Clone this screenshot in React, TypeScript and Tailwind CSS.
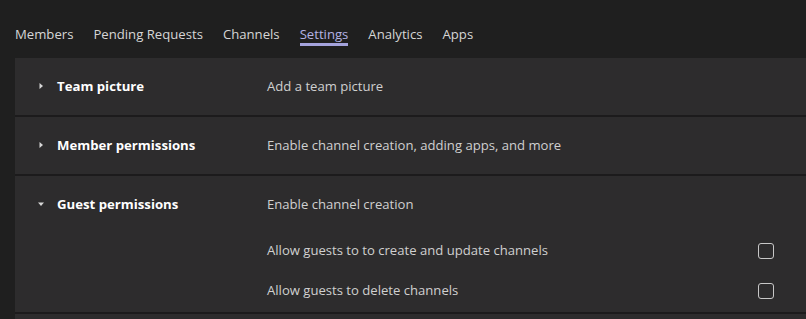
const tabs = ["Members", "Pending Requests", "Channels", "Settings", "Analytics", "Apps"];

function Caret({ open }: { open?: boolean }) {
  return (
    <svg width="8" height="8" viewBox="0 0 8 8" className="shrink-0">
      {open ? (
        <path d="M1 2.5 L7 2.5 L4 6 Z" fill="#d6d6d6" />
      ) : (
        <path d="M2.5 1 L6 4 L2.5 7 Z" fill="#d6d6d6" />
      )}
    </svg>
  );
}

function Checkbox() {
  return <div className="h-4 w-4 rounded-[3px] border border-[#c8c8c8]" />;
}

function Row({
  title,
  desc,
  open,
  children,
}: {
  title: string;
  desc: string;
  open?: boolean;
  children?: React.ReactNode;
}) {
  return (
    <div className="bg-[#2d2c2d]">
      <div className="flex h-[57px] items-center">
        <div className="flex w-[252px] items-center pl-[22px]">
          <div className="w-[20px]">
            <Caret open={open} />
          </div>
          <span className="text-[13.2px] font-bold text-white">{title}</span>
        </div>
        <span className="text-[13.1px] text-[#d0d0d0]">{desc}</span>
      </div>
      {children}
    </div>
  );
}

export default function App() {
  return (
    <div
      className="h-[319px] w-[806px] overflow-hidden bg-[#1f1f1f]"
      style={{ fontFamily: '"Open Sans", sans-serif' }}
    >
      <div className="flex gap-5 px-[15px] pt-[24px]">
        {tabs.map((t) => (
          <div key={t} className="flex flex-col">
            <span
              className={
                t === "Settings"
                  ? "text-[13.15px] leading-[20px] text-[#b3b2e4]"
                  : "text-[13.15px] leading-[20px] text-[#d6d6d6]"
              }
            >
              {t}
            </span>
            <div
              className={
                t === "Settings"
                  ? "mt-[-1px] h-[3px] bg-[#a4a3dc]"
                  : "mt-[-1px] h-[3px]"
              }
            />
          </div>
        ))}
      </div>
      <div className="ml-[15px] mt-[12px] flex flex-col gap-[2px] bg-[#1c1b1c]">
        <Row title="Team picture" desc="Add a team picture" />
        <Row title="Member permissions" desc="Enable channel creation, adding apps, and more" />
        <Row title="Guest permissions" desc="Enable channel creation" open>
          <div className="flex flex-col gap-[20px] pb-[11px] pl-[252px] pr-[32px] pt-[8px]">
            <div className="flex h-[20px] items-center justify-between">
              <span className="text-[13.1px] text-[#d0d0d0]">
                Allow guests to to create and update channels
              </span>
              <Checkbox />
            </div>
            <div className="flex h-[20px] items-center justify-between">
              <span className="text-[13.1px] text-[#d0d0d0]">Allow guests to delete channels</span>
              <Checkbox />
            </div>
          </div>
        </Row>
        <Row title="" desc="" />
      </div>
    </div>
  );
}
